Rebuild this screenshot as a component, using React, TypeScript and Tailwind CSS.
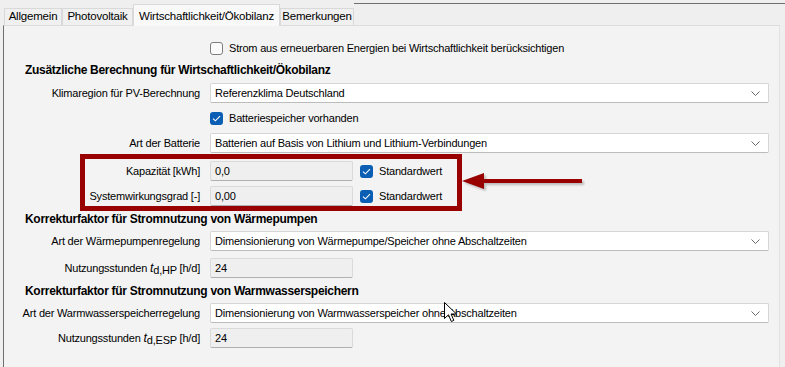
import React from 'react';

const font = { fontFamily: '"Liberation Sans", Arial, sans-serif' };

function Check({ checked }: { checked?: boolean }) {
  if (checked) {
    return (
      <span className="flex h-[13px] w-[13px] shrink-0 items-center justify-center rounded-[3px] bg-[#0a5fb4]">
        <svg width="9" height="7" viewBox="0 0 9 7">
          <path d="M1 3.6 L3.4 5.8 L8 1.2" fill="none" stroke="#ffffff" strokeWidth="1.1" />
        </svg>
      </span>
    );
  }
  return <span className="h-[13px] w-[13px] shrink-0 rounded-[3px] border border-[#7e7e7e] bg-[#fbfbfb]" />;
}

function Chevron() {
  return (
    <svg width="9" height="5" viewBox="0 0 9 5" className="mr-[8px]">
      <path d="M0.5 0.5 L4.5 4.5 L8.5 0.5" fill="none" stroke="#6a6a6a" strokeWidth="1" />
    </svg>
  );
}

function Select({ value }: { value: string }) {
  return (
    <div className="flex h-[20px] w-[559px] items-center justify-between rounded-[2px] border border-[#d6d6d6] border-b-[#bcbcbc] bg-white pl-[4px]">
      <span className="whitespace-nowrap">{value}</span>
      <Chevron />
    </div>
  );
}

function Field({ value }: { value: string }) {
  return (
    <div className="flex h-[20px] w-[143px] items-center rounded-[2px] border border-[#dadada] border-b-[#b0b0b0] bg-[#efefef] pl-[4px]">
      {value}
    </div>
  );
}

function Row({ label, children, className }: { label?: React.ReactNode; children: React.ReactNode; className?: string }) {
  return (
    <div className={'flex h-[20px] items-center ' + (className ?? '')}>
      <div className="w-[196px] shrink-0 whitespace-nowrap text-right">{label}</div>
      <div className="ml-[10px] flex items-center whitespace-nowrap">{children}</div>
    </div>
  );
}

function Heading({ children, className }: { children: React.ReactNode; className?: string }) {
  return (
    <div className={'flex h-[20px] items-center whitespace-nowrap pl-[21px] text-[12px] font-bold tracking-[-0.3px] ' + (className ?? '')}>
      {children}
    </div>
  );
}

function Hours({ sub }: { sub: string }) {
  return (
    <span>
      Nutzungsstunden <i className="text-[12.5px]">t</i>
      <sub className="text-[11px]">{'d,' + sub}</sub> [h/d]
    </span>
  );
}

export default function App() {
  const tabs = ['Allgemein', 'Photovoltaik', 'Wirtschaftlichkeit/Ökobilanz', 'Bemerkungen'];
  const widths = ['w-[58px]', 'w-[71px]', 'w-[147px]', 'w-[74px]'];

  return (
    <div
      className="relative h-[367px] w-[785px] overflow-hidden bg-[#efefef] text-[11px] tracking-[-0.2px] text-black"
      style={font}
    >
      {/* tab strip */}
      <div className="flex h-[25px] items-end pl-[4px]">
        {tabs.map((t, i) =>
          i === 2 ? (
            <div
              key={t}
              className={'relative z-10 -mb-px flex h-[22px] items-start justify-center whitespace-nowrap border border-b-0 border-[#d9d9d9] bg-[#f9f9f9] pt-[3px] text-[11.5px] ' + widths[i]}
            >
              {t}
            </div>
          ) : (
            <div
              key={t}
              className={'flex h-[17px] items-center justify-center whitespace-nowrap border border-b-0 border-[#d9d9d9] bg-[#f0f0f0] text-[11.5px] ' + widths[i]}
            >
              {t}
            </div>
          )
        )}
        <div className="h-[22px] flex-1 border-t border-[#6f6f6f]" />
      </div>

      {/* panel */}
      <div className="ml-[3px] mr-[5px] h-[342px] border-l border-r border-t border-l-[#6f6f6f] border-r-[#e2e2e2] border-t-[#dcdcdc] bg-[#f3f3f3] pt-[12px]">
        <Row>
          <Check />
          <span className="ml-[6px]">Strom aus erneuerbaren Energien bei Wirtschaftlichkeit berücksichtigen</span>
        </Row>
        <Heading className="mt-[2px]">Zusätzliche Berechnung für Wirtschaftlichkeit/Ökobilanz</Heading>
        <Row label="Klimaregion für PV-Berechnung" className="mt-[3px]">
          <Select value="Referenzklima Deutschland" />
        </Row>
        <Row className="mt-[5px]">
          <Check checked />
          <span className="ml-[6px]">Batteriespeicher vorhanden</span>
        </Row>
        <Row label="Art der Batterie" className="mt-[5px]">
          <Select value="Batterien auf Basis von Lithium und Lithium-Verbindungen" />
        </Row>
        <Row label="Kapazität [kWh]" className="mt-[8px]">
          <Field value="0,0" />
          <span className="ml-[7px]">
            <Check checked />
          </span>
          <span className="ml-[6px]">Standardwert</span>
        </Row>
        <Row label="Systemwirkungsgrad [-]" className="mt-[5px]">
          <Field value="0,00" />
          <span className="ml-[7px]">
            <Check checked />
          </span>
          <span className="ml-[6px]">Standardwert</span>
        </Row>
        <Heading className="mt-[3px]">Korrekturfaktor für Stromnutzung von Wärmepumpen</Heading>
        <Row label="Art der Wärmepumpenregelung" className="mt-[2px]">
          <Select value="Dimensionierung von Wärmepumpe/Speicher ohne Abschaltzeiten" />
        </Row>
        <Row label={<Hours sub="HP" />} className="mt-[7px]">
          <Field value="24" />
        </Row>
        <Heading className="mt-[3px]">Korrekturfaktor für Stromnutzung von Warmwasserspeichern</Heading>
        <Row label="Art der Warmwasserspeicherregelung" className="mt-[2px]">
          <Select value="Dimensionierung von Warmwasserspeicher ohne Abschaltzeiten" />
        </Row>
        <Row label={<Hours sub="ESP" />} className="mt-[5px]">
          <Field value="24" />
        </Row>
      </div>

      {/* annotation: red frame */}
      <div className="pointer-events-none absolute left-[80px] top-[154px] h-[57px] w-[382px] border-[5px] border-[#990000]" />

      {/* annotation: arrow */}
      <svg className="pointer-events-none absolute left-[458px] top-[168px]" width="132" height="26" viewBox="0 0 132 26">
        <defs>
          <filter id="sh" x="-10%" y="-50%" width="120%" height="200%">
            <feGaussianBlur stdDeviation="1.2" />
          </filter>
        </defs>
        <g transform="translate(2 2)" opacity="0.35" filter="url(#sh)">
          <polygon points="4,13 26,5 26,11 124,11 124,15 26,15 26,21" fill="#555" />
        </g>
        <polygon points="4,13 26,5 26,11 124,11 124,15 26,15 26,21" fill="#990000" />
      </svg>

      {/* mouse cursor */}
      <svg className="pointer-events-none absolute left-[444px] top-[302px]" width="14" height="22" viewBox="0 0 14 22">
        <path d="M0.5 0.5 L0.5 16.5 L4.5 12.8 L7.3 19.5 L9.8 18.4 L7.1 12 L12.5 12 Z" fill="#ffffff" stroke="#000000" strokeWidth="1" />
      </svg>
    </div>
  );
}
